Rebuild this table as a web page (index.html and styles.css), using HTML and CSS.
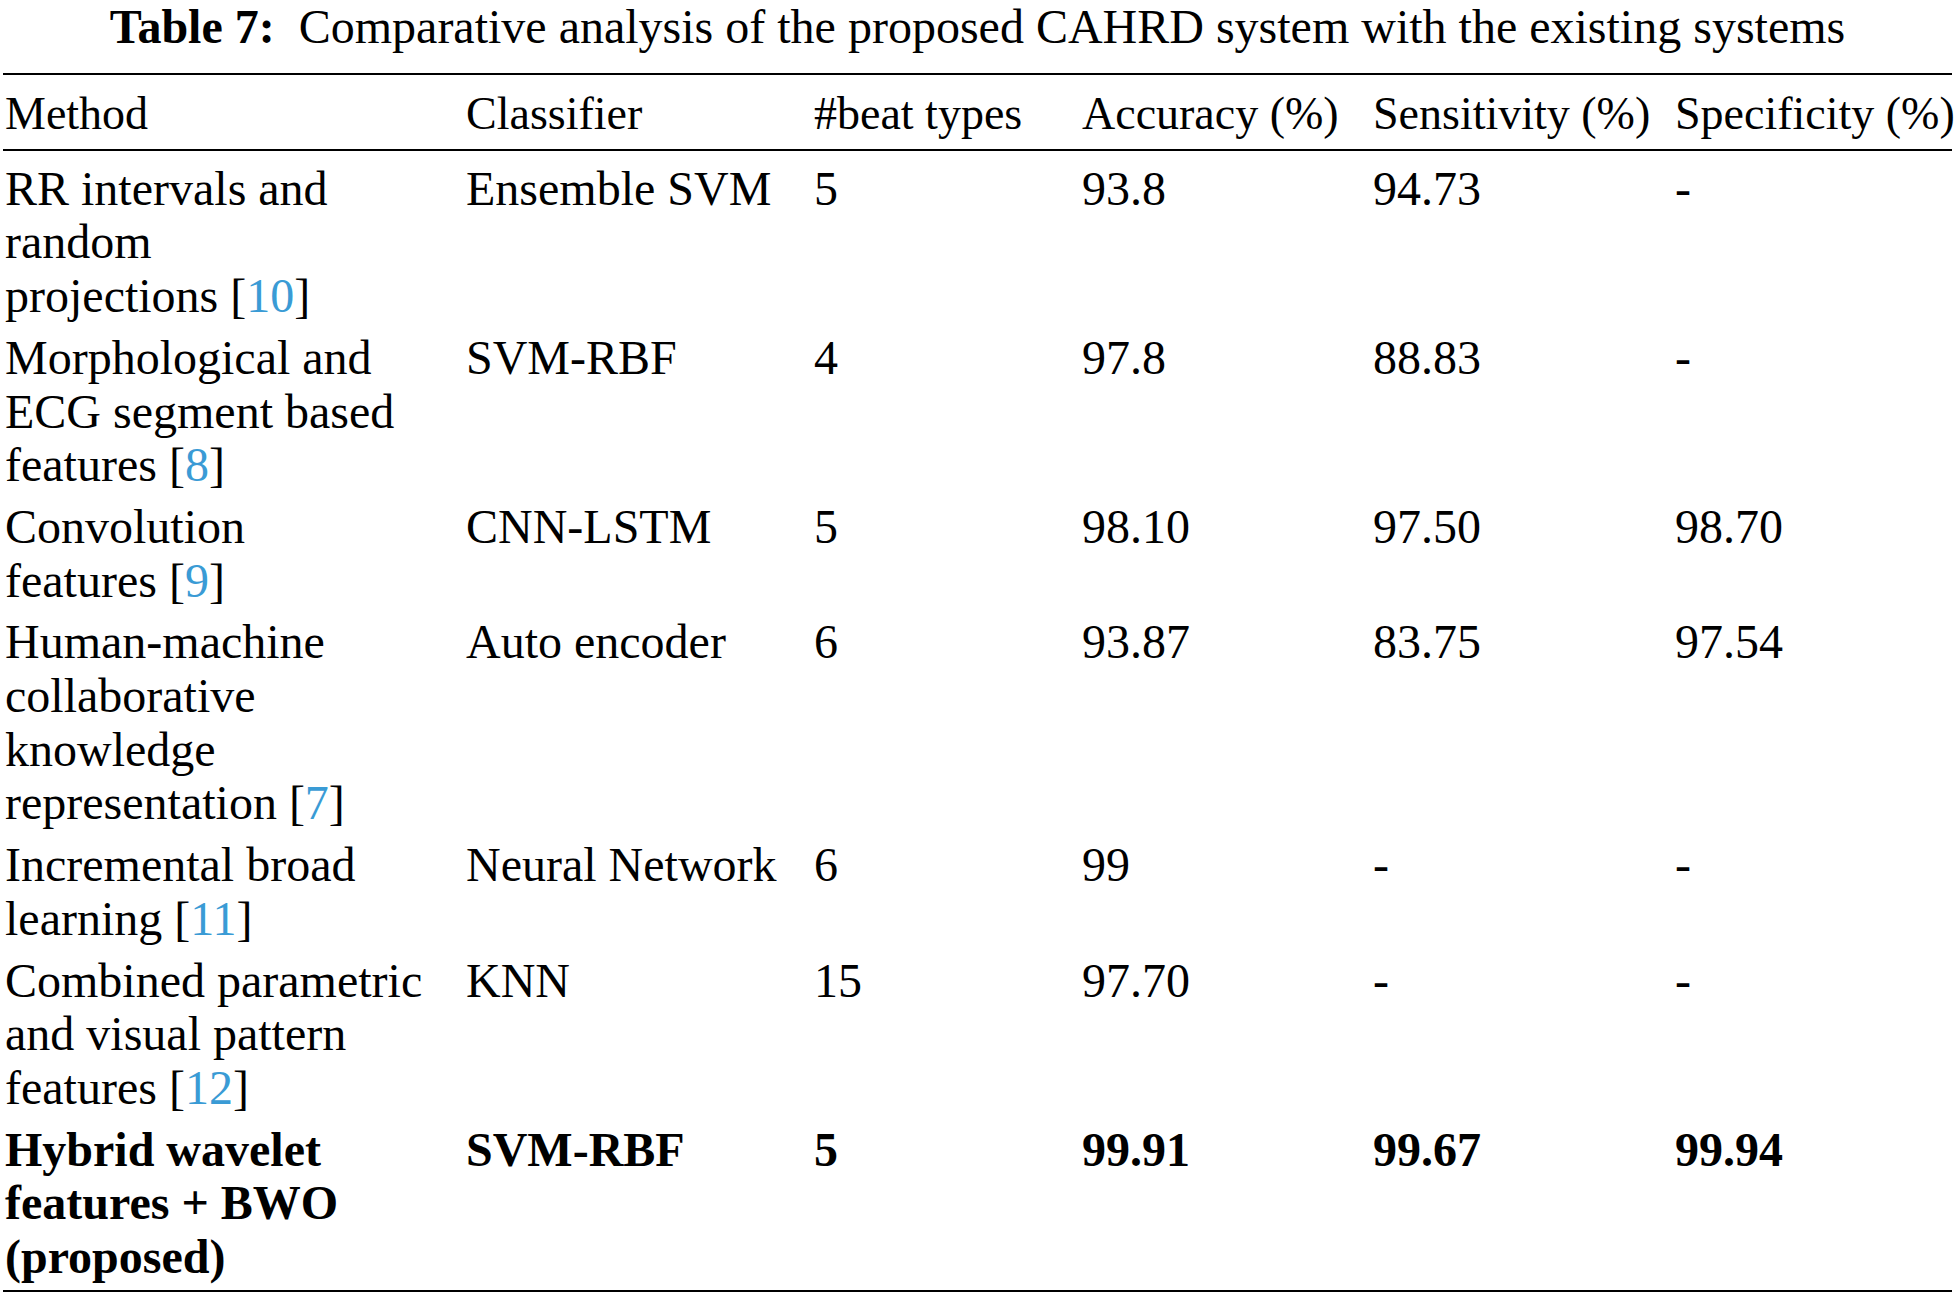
FILE: index.html
```html
<!DOCTYPE html>
<html lang="en">
<head>
<meta charset="utf-8">
<title>Table 7</title>
<link rel="stylesheet" href="styles.css">
</head>
<body>
<div class="page">
  <div class="title"><b>Table 7:</b>&nbsp; Comparative analysis of the proposed CAHRD system with the existing systems</div>
  <table class="tbl">
    <colgroup>
      <col class="c1"><col class="c2"><col class="c3"><col class="c4"><col class="c5"><col class="c6">
    </colgroup>
    <thead>
      <tr>
        <th>Method</th>
        <th>Classifier</th>
        <th>#beat types</th>
        <th>Accuracy (%)</th>
        <th>Sensitivity (%)</th>
        <th>Specificity (%)</th>
      </tr>
    </thead>
    <tbody>
      <tr>
        <td>RR intervals and random projections&nbsp;[<span class="ref">10</span>]</td>
        <td>Ensemble SVM</td>
        <td>5</td>
        <td>93.8</td>
        <td>94.73</td>
        <td>-</td>
      </tr>
      <tr>
        <td>Morphological and ECG segment based features&nbsp;[<span class="ref">8</span>]</td>
        <td>SVM-RBF</td>
        <td>4</td>
        <td>97.8</td>
        <td>88.83</td>
        <td>-</td>
      </tr>
      <tr>
        <td>Convolution features&nbsp;[<span class="ref">9</span>]</td>
        <td>CNN-LSTM</td>
        <td>5</td>
        <td>98.10</td>
        <td>97.50</td>
        <td>98.70</td>
      </tr>
      <tr>
        <td>Human-machine collaborative knowledge representation&nbsp;[<span class="ref">7</span>]</td>
        <td>Auto encoder</td>
        <td>6</td>
        <td>93.87</td>
        <td>83.75</td>
        <td>97.54</td>
      </tr>
      <tr>
        <td>Incremental broad learning&nbsp;[<span class="ref">11</span>]</td>
        <td>Neural Network</td>
        <td>6</td>
        <td>99</td>
        <td>-</td>
        <td>-</td>
      </tr>
      <tr>
        <td>Combined parametric and visual pattern features&nbsp;[<span class="ref">12</span>]</td>
        <td>KNN</td>
        <td>15</td>
        <td>97.70</td>
        <td>-</td>
        <td>-</td>
      </tr>
      <tr class="best">
        <td>Hybrid wavelet features + BWO (proposed)</td>
        <td>SVM-RBF</td>
        <td>5</td>
        <td>99.91</td>
        <td>99.67</td>
        <td>99.94</td>
      </tr>
    </tbody>
  </table>
</div>
</body>
</html>
```

FILE: styles.css
```css
html, body {
  margin: 0;
  padding: 0;
  background: #ffffff;
}

body {
  font-family: "Liberation Serif", "Times New Roman", serif;
  color: #000000;
  overflow: hidden;
}

.page {
  width: 1949px;
  padding-left: 3px;
}

.title {
  font-size: 48px;
  line-height: 53px;
  height: 53px;
  margin-bottom: 20px;
  text-align: center;
  white-space: nowrap;
}

.title b {
  font-weight: bold;
}

.tbl {
  width: 1949px;
  table-layout: fixed;
  border-collapse: collapse;
  border-top: 2px solid #000;
  border-bottom: 2px solid #000;
}

.c1 { width: 461px; }
.c2 { width: 348px; }
.c3 { width: 268px; }
.c4 { width: 291px; }
.c5 { width: 302px; }
.c6 { width: 279px; }

.tbl th {
  font-weight: normal;
  font-size: 46px;
  line-height: 53.7px;
  text-align: left;
  white-space: nowrap;
  padding: 12px 0 8px 2px;
  border-bottom: 2px solid #000;
  vertical-align: top;
}

.tbl td {
  font-size: 48px;
  line-height: 53.7px;
  text-align: left;
  vertical-align: top;
  padding: 8px 0 0 2px;
}

.tbl tbody tr:first-child td {
  padding-top: 11px;
}

.tbl tbody tr:last-child td {
  padding-bottom: 6px;
}

.best td {
  font-weight: bold;
}

.ref {
  color: #3a9bd5;
}
```
